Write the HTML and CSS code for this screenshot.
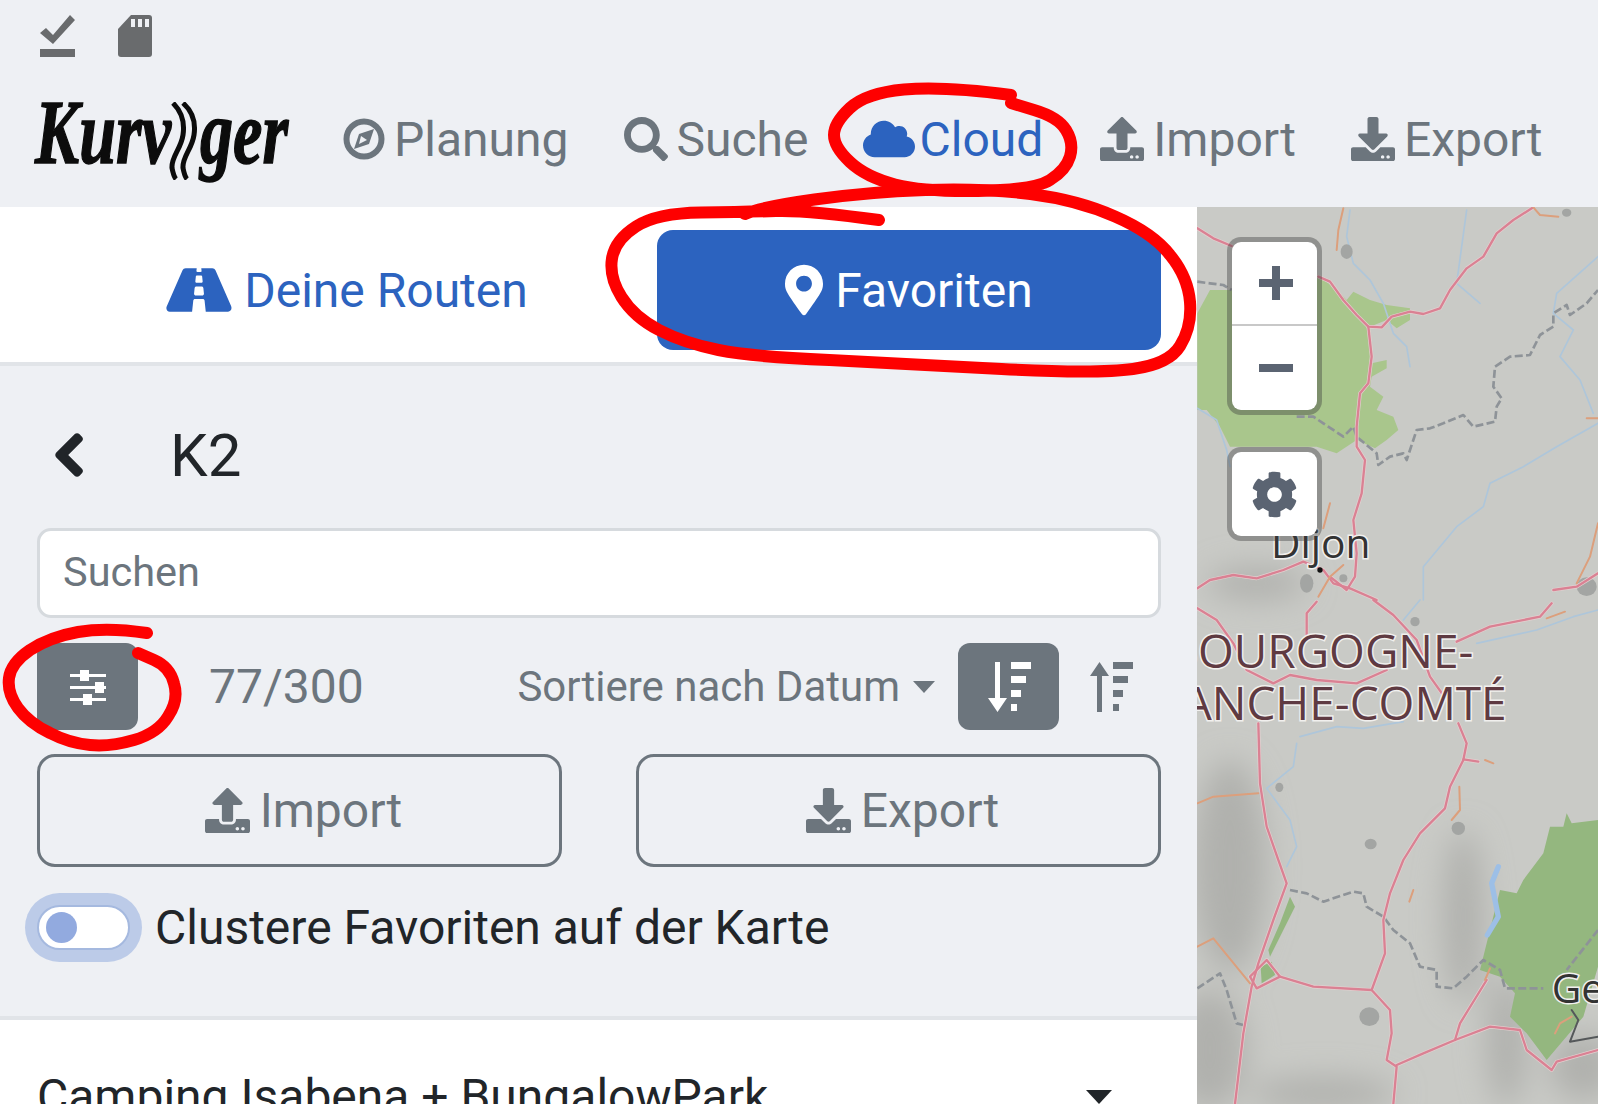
FILE: index.html
```html
<!DOCTYPE html>
<html lang="de">
<head>
  <meta charset="UTF-8">
  <title>Kurviger - Favoriten</title>
  <link rel="stylesheet" href="styles.css">
</head>
<body>

  <!-- Header -->
  <div class="header">
    <div class="status-icons">
      <svg class="status-check" viewBox="0 0 35 42"><path d="M0 18l6-5 7 7L30 0l5 5-22 24z"/><rect y="34" width="35" height="8"/></svg>
      <svg class="status-sd" viewBox="0 0 34 42"><path d="M13 0h18a3 3 0 0 1 3 3v36a3 3 0 0 1-3 3H3a3 3 0 0 1-3-3V14z"/><path class="sd-pins" d="M13 4h4v8h-4zM20 4h4v8h-4zM27 4h4v8h-4z"/></svg>
    </div>
    <div class="nav">
      <div class="logo">
        <span class="logo-text">Kurv</span>
        <svg class="logo-wave" viewBox="0 0 30 78"><path d="M5 1C13 9 17 20 15 33 13 47 3 55 4 66 5 71 6 75 8 77"/><path d="M15 1C24 9 28 20 26 33 24 47 14 55 15 66 16 71 17 75 19 77"/></svg>
        <span class="logo-text logo-end">ger</span>
      </div>
      <a class="nav-link">
        <svg class="nav-icon icon-compass" viewBox="0 0 42 42"><circle class="compass-ring" cx="21" cy="21" r="17.500"/><path d="M31 11L26 26 11 31 16 16z"/><path class="compass-cut" d="M16 26L24 22 18 18z"/></svg>
        Planung
      </a>
      <a class="nav-link">
        <svg class="nav-icon" viewBox="0 0 512 512"><path d="M505 442.7L405.3 343c-4.5-4.5-10.6-7-17-7H372c27.6-35.3 44-79.7 44-128C416 93.1 322.9 0 208 0S0 93.1 0 208s93.1 208 208 208c48.3 0 92.7-16.4 128-44v16.3c0 6.4 2.5 12.5 7 17l99.7 99.7c9.4 9.4 24.6 9.4 33.9 0l28.3-28.3c9.4-9.4 9.4-24.6.1-34zM208 336c-70.7 0-128-57.2-128-128 0-70.7 57.2-128 128-128 70.7 0 128 57.2 128 128 0 70.7-57.2 128-128 128z"/></svg>
        Suche
      </a>
      <a class="nav-link active">
        <svg class="nav-icon icon-cloud" viewBox="0 0 640 512"><path d="M537.6 226.6c4.1-10.7 6.4-22.4 6.4-34.6 0-53-43-96-96-96-19.7 0-38.1 6-53.3 16.2C367 64.2 315.3 32 256 32c-88.4 0-160 71.6-160 160 0 2.7.1 5.4.2 8.1C40.2 219.8 0 273.2 0 336c0 79.5 64.5 144 144 144h368c70.7 0 128-57.3 128-128 0-61.9-44-113.6-102.4-125.4z"/></svg>
        Cloud
      </a>
      <a class="nav-link">
        <svg class="nav-icon" viewBox="0 0 512 512"><use href="#icon-upload"/></svg>
        Import
      </a>
      <a class="nav-link">
        <svg class="nav-icon" viewBox="0 0 512 512"><use href="#icon-download"/></svg>
        Export
      </a>
    </div>
  </div>

  <div class="main">
    <!-- Sidebar -->
    <div class="sidebar">
      <div class="tabs">
        <button class="tab">
          <svg class="tab-road" viewBox="0 0 576 512"><path d="M573.19 402.67l-139.79-320C428.43 71.29 417.6 64 405.68 64h-97.59l2.45 23.16c.5 4.72-3.21 8.84-7.96 8.84h-29.16c-4.75 0-8.46-4.12-7.96-8.84L267.91 64h-97.59c-11.93 0-22.76 7.29-27.73 18.67L2.8 402.67C-6.45 423.86 8.31 448 30.11 448h196.83l10.31-97.68c.86-8.14 7.72-14.32 15.91-14.32h68.34c8.19 0 15.05 6.18 15.91 14.32L347.72 448h196.83c21.8 0 36.56-24.14 27.64-45.33zM260.4 135.16a8 8 0 0 1 7.96-7.16h39.29c4.09 0 7.53 3.09 7.96 7.16l4.6 43.58c.75 7.09-4.81 13.26-11.93 13.26h-40.54c-7.13 0-12.68-6.17-11.93-13.26l4.6-43.58zM315.64 304h-55.29c-9.5 0-16.91-8.23-15.91-17.68l5.07-48c.86-8.14 7.72-14.32 15.91-14.32h45.15c8.19 0 15.05 6.18 15.91 14.32l5.07 48c1 9.45-6.41 17.68-15.91 17.68z"/></svg>
          Deine Routen
        </button>
        <button class="tab tab-active">
          <svg class="tab-pin" viewBox="0 0 384 512"><path d="M172.268 501.67C26.97 291.031 0 268.413 0 192 0 85.961 85.961 0 192 0s192 85.961 192 192c0 76.413-26.97 99.031-172.268 309.67-9.535 13.774-29.93 13.773-39.464 0zM192 272c44.183 0 80-35.817 80-80s-35.817-80-80-80-80 35.817-80 80 35.817 80 80 80z"/></svg>
          Favoriten
        </button>
      </div>

      <div class="panel">
        <div class="folder-row">
          <svg class="back-icon" viewBox="0 0 320 512"><path d="M34.52 239.03L228.87 44.69c9.37-9.37 24.57-9.37 33.94 0l22.67 22.67c9.36 9.36 9.37 24.52.04 33.9L131.49 256l154.02 154.75c9.34 9.38 9.32 24.54-.04 33.9l-22.67 22.67c-9.37 9.37-24.57 9.37-33.94 0L34.52 272.97c-9.37-9.37-9.37-24.57 0-33.94z"/></svg>
          <div class="folder-name">K2</div>
        </div>

        <input class="search" type="text" placeholder="Suchen">

        <div class="toolbar">
          <button class="square-btn filter-btn">
            <svg viewBox="0 0 36 36" class="sliders"><path d="M0 5h36v3H0zM0 17h36v3H0zM0 29h36v3H0z"/><path d="M10 1h9v11h-9zM25 13h9v11h-9zM13 25h9v11h-9z"/></svg>
          </button>
          <div class="counter">77/300</div>
          <div class="sort-label">Sortiere nach Datum<span class="caret"></span></div>
          <button class="square-btn sort-btn">
            <svg viewBox="0 0 44 50" class="sort-icon"><path d="M8 0h5v36h7L10.500 50 1 36h7zM24 0h20v7H24zM24 14h15v7H24zM24 28h10v7H24zM24 42h6v7h-6z"/></svg>
          </button>
          <button class="sort-plain">
            <svg viewBox="0 0 44 50" class="sort-icon"><path d="M8 50h5V14h7L10.500 0 1 14h7zM24 0h20v7H24zM24 14h15v7H24zM24 28h10v7H24zM24 42h6v7h-6z"/></svg>
          </button>
        </div>

        <div class="action-row">
          <button class="outline-btn">
            <svg class="btn-icon" viewBox="0 0 512 512"><use href="#icon-upload"/></svg>
            Import
          </button>
          <button class="outline-btn">
            <svg class="btn-icon" viewBox="0 0 512 512"><use href="#icon-download"/></svg>
            Export
          </button>
        </div>

        <div class="switch-row">
          <div class="switch"><span class="switch-dot"></span></div>
          <div class="switch-label">Clustere Favoriten auf der Karte</div>
        </div>
      </div>

      <div class="list">
        <div class="list-item">
          <span>Camping Isabena + BungalowPark</span>
          <span class="list-caret"></span>
        </div>
      </div>
    </div>

    <!-- Map -->
    <div class="map">
      <svg class="map-canvas" viewBox="21 21 1203 2691">
        <defs>
          <filter id="soft" x="-60%" y="-60%" width="220%" height="220%"><feGaussianBlur stdDeviation="45"/></filter>
          <filter id="softer"><feGaussianBlur stdDeviation="1.500"/></filter>
          <g id="roads">
            <path d="M22 85L70 115 125 138"/>
            <path d="M385 230L420 245 460 300 500 345 535 380 575 382 605 350 660 335 700 342 750 325 780 270 830 205 880 170 920 100 970 60 1030 22"/>
            <path d="M535 380L545 470 535 550 510 580 500 680 500 740 525 780 515 880 490 960 500 1060 495 1130 470 1170 420 1130"/>
            <path d="M22 1165L60 1140 130 1125 200 1135 280 1110 340 1085 400 1110 430 1150 480 1165 560 1200"/>
            <path d="M1090 1170L1160 1160 1224 1120"/>
            <g transform="translate(0 1200)">
              <path d="M22 25L80 60 130 130 170 210 250 250 300 225 380 240 500 250 590 210"/>
              <path d="M350 110L350 40 380 5"/>
              <path d="M550 0L610 45 680 120 720 230 770 300"/>
              <path d="M800 125L900 80 1050 50 1085 10"/>
              <path d="M205 370L210 550 230 680 265 780 290 850 250 960 205 1090 185 1160 160 1300 135 1512"/>
              <path d="M805 370L830 430 820 480 780 560 765 625 690 700 640 780 600 880 580 960 585 1060 545 1170 600 1230 605 1300 590 1380 620 1400 610 1512"/>
              <path d="M820 478L865 485"/>
              <path d="M620 1395L700 1360 795 1320 900 1280 990 1290 1010 1350 1085 1410 1100 1385 1224 1350"/>
              <path d="M795 1320L810 1270 890 1140"/>
              <path d="M270 1130L370 1160 545 1170"/>
              <path d="M180 1130L230 1080 270 1130 200 1165z"/>
            </g>
          </g>
        </defs>

        <rect x="0" y="0" width="1300" height="2800" class="land"/>

        <!-- hill shading -->
        <g filter="url(#soft)" class="relief">
          <ellipse cx="120" cy="2000" rx="110" ry="320"/>
          <ellipse cx="60" cy="2550" rx="110" ry="180"/>
          <ellipse cx="950" cy="2520" rx="60" ry="200"/>
          <ellipse cx="820" cy="2150" rx="60" ry="260"/>
          <ellipse cx="1180" cy="2600" rx="100" ry="100"/>
          <ellipse cx="200" cy="1150" rx="150" ry="50"/>
          <ellipse cx="400" cy="2680" rx="220" ry="50"/>
        </g>

        <!-- forests -->
        <path class="forest" d="M22 340L60 270 125 270 385 230 430 260 470 300 490 275 540 300 590 315 660 325 660 360 620 385 590 360 540 380 545 490 590 480 590 505 545 530 540 560 580 590 560 630 610 650 625 690 590 720 555 745 500 720 440 760 380 740 120 740 90 680 50 630 22 630z"/>
        <g transform="translate(0 1200)">
          <path class="forest-dark" d="M1130 640L1145 670 1224 660 1224 1100 1180 1250 1070 1380 1010 1300 960 1250 975 1180 930 1130 870 1110 890 1030 930 870 980 880 1000 840 1060 760 1080 680 1120 680z"/>
          <path class="forest-dark" d="M300 890L315 920 270 1010 240 1070 235 1050 270 970z"/>
          <path class="forest-dark" d="M212 1100L245 1085 255 1125 215 1150z"/>
        </g>

        <!-- water -->
        <g class="river">
          <path d="M480 30L470 110 490 190 540 240 580 310 610 400 650 440 660 500"/>
          <path d="M830 30L800 250 870 310"/>
          <path d="M1224 170L1100 280 1090 340 1150 390 1110 470 1170 540 1210 640"/>
          <path d="M700 1200L700 1100 800 980 880 920 900 850 1000 800 1100 740 1224 670"/>
          <path d="M22 625L80 660 110 750 120 800"/>
          <g transform="translate(0 1200)">
            <path d="M320 430L310 500 230 565 300 660 320 740 290 800"/>
            <path d="M330 410L440 380 520 385 640 365"/>
            <path d="M860 130L1040 90 1150 50 1224 30"/>
            <path d="M640 60L690 0"/>
          </g>
        </g>
        <path class="lake" transform="translate(0 1200)" d="M925 800L905 850 925 950 892 1005"/>

        <!-- towns -->
        <g class="town">
          <ellipse cx="470" cy="155" rx="18" ry="22"/>
          <ellipse cx="1130" cy="38" rx="14" ry="12"/>
          <ellipse cx="350" cy="1150" rx="20" ry="28"/>
          <ellipse cx="460" cy="1135" rx="12" ry="12"/>
          <ellipse cx="1190" cy="1160" rx="30" ry="28"/>
          <g transform="translate(0 1200)">
            <ellipse cx="675" cy="65" rx="14" ry="14"/>
            <ellipse cx="805" cy="685" rx="20" ry="20"/>
            <ellipse cx="538" cy="1250" rx="30" ry="28"/>
            <ellipse cx="542" cy="732" rx="18" ry="16"/>
            <ellipse cx="268" cy="562" rx="12" ry="14"/>
          </g>
        </g>

        <!-- borders -->
        <g class="border">
          <path d="M22 245L60 250 100 255 125 270"/>
          <path d="M320 650L370 650 400 670 460 710 490 680 500 710 560 760 565 795 600 770 640 760 650 780 680 690 720 685 760 670 820 645 850 680 915 665 920 620 935 595 910 560 915 500 960 470 1020 465 1050 405 1090 380 1090 340 1130 315 1140 345 1190 310 1224 270"/>
          <g transform="translate(0 1200)">
            <path d="M300 870L350 880 400 905 490 875 520 880 530 920 580 950 610 990 660 1030 690 1100 740 1110 740 1160 790 1165 830 1130 880 1080 930 1110 945 1165 1060 1165"/>
            <path d="M22 1165L90 1120 110 1170 140 1270 160 1275"/>
            <path d="M1224 990L1130 1110"/>
          </g>
        </g>
        <path class="border-dark" transform="translate(0 1200)" d="M1145 1230L1165 1260 1140 1325 1224 1310"/>

        <!-- roads -->
        <g filter="url(#softer)">
          <use href="#roads" class="road-case"/>
          <use href="#roads" class="road-line"/>
          <g class="road-minor">
            <path d="M460 25L445 90 440 150"/>
            <path d="M1030 22L1050 45 1105 50"/>
            <path d="M420 910L400 985"/>
            <path d="M1190 655L1224 655"/>
            <path d="M1224 970L1200 1070 1160 1150"/>
            <path d="M385 1190L420 1130 460 1095"/>
            <g transform="translate(0 1200)">
              <path d="M22 610L70 590 205 580"/>
              <path d="M22 1040L70 1015 180 1150"/>
              <path d="M808 560L810 630 785 660"/>
              <path d="M670 870L658 905"/>
              <path d="M885 480L910 490"/>
              <path d="M1070 55L1125 35"/>
              <path d="M1095 1300L1110 1270 1145 1250"/>
              <path d="M885 1140L900 1105"/>
            </g>
          </g>
        </g>

        <circle class="city-dot" cx="390" cy="1110" r="8"/>
        <text class="city" x="243" y="1075">Dijon</text>
        <text class="region" x="850" y="1405" text-anchor="end">BOURGOGNE-</text>
        <text class="region" x="950" y="1560" text-anchor="end">FRANCHE-COMTÉ</text>
        <text class="city" x="1085" y="2410">Genève</text>
      </svg>

      <div class="map-controls">
        <div class="map-box">
          <button class="map-btn map-btn-top"><svg viewBox="0 0 34 34" class="zoom-icon"><path d="M13 0h8v13h13v8H21v13h-8V21H0v-8h13z"/></svg></button>
          <button class="map-btn"><svg viewBox="0 0 34 34" class="zoom-icon"><path d="M0 13h34v8H0z"/></svg></button>
        </div>
        <div class="map-box">
          <button class="map-btn map-btn-gear">
            <svg viewBox="0 0 512 512" class="gear-icon"><path d="M487.4 315.7l-42.6-24.6c4.3-23.2 4.3-47 0-70.2l42.6-24.6c4.9-2.8 7.1-8.6 5.5-14-11.1-35.6-30-67.8-54.7-94.6-3.8-4.1-10-5.1-14.8-2.3L380.8 110c-17.9-15.4-38.5-27.3-60.8-35.1V25.8c0-5.6-3.9-10.5-9.4-11.7-36.7-8.2-74.3-7.8-109.2 0-5.5 1.2-9.4 6.1-9.4 11.7V75c-22.2 7.9-42.8 19.8-60.8 35.1L88.7 85.5c-4.9-2.8-11-1.9-14.8 2.3-24.7 26.7-43.6 58.9-54.7 94.6-1.7 5.4.6 11.2 5.5 14L67.3 221c-4.3 23.2-4.3 47 0 70.2l-42.6 24.6c-4.9 2.8-7.1 8.6-5.5 14 11.1 35.6 30 67.8 54.7 94.6 3.8 4.1 10 5.1 14.8 2.3l42.6-24.6c17.9 15.4 38.5 27.3 60.8 35.1v49.2c0 5.6 3.9 10.5 9.4 11.7 36.7 8.2 74.3 7.8 109.2 0 5.5-1.2 9.4-6.1 9.4-11.7v-49.2c22.2-7.9 42.8-19.8 60.8-35.1l42.6 24.6c4.9 2.8 11 1.9 14.8-2.3 24.7-26.7 43.6-58.9 54.7-94.6 1.5-5.5-.7-11.3-5.6-14.1zM256 336c-44.1 0-80-35.9-80-80s35.9-80 80-80 80 35.9 80 80-35.9 80-80 80z"/></svg>
          </button>
        </div>
      </div>
    </div>
  </div>

  <!-- Red marker scribbles on top of the screenshot -->
  <svg class="scribbles" viewBox="0 0 1598 1104">
    <path d="M1011 95Q944 86 904 89.500Q866 93 850 108Q834 123 834 135Q834 147 850 162Q866 177 895 184.500Q925 192 978.500 191Q1034 190 1050 180Q1066 170 1070 156.500Q1074 143 1066 130Q1058 117 1034 110L1011 103"/>
    <path d="M879 220Q807 210 776 211Q745 212 701 212.500Q657 213 636 226.500Q615 240 612 258.500Q609 277 621.500 297Q634 317 659 330Q684 343 718.500 350Q753 357 829.500 360Q906 364 1001.500 369Q1097 374 1133 369Q1169 364 1180 346Q1192 327 1190 302Q1188 277 1170 255Q1153 233 1115 216.500Q1078 200 1030.500 194Q983 188 925.500 190Q868 192 814.500 199.500Q761 207 745 214"/>
    <path d="M147 633Q107 627 78 632Q50 637 30 650Q11 663 9 678Q7 693 18 708Q29 723 50 733Q69 743 90 745Q110 747 134 740Q158 733 168 716.500Q179 700 174 683.500Q170 667 154 660L138 653"/>
  </svg>

  <!-- Shared icons -->
  <svg class="icon-defs">
    <defs>
      <path id="icon-upload" d="M296 384h-80c-13.300 0-24-10.700-24-24V192h-87.700c-17.800 0-26.700-21.500-14.100-34.100L242.300 5.700c7.500-7.500 19.800-7.500 27.300 0l152.200 152.200c12.600 12.600 3.700 34.100-14.100 34.100H320v168c0 13.300-10.700 24-24 24zm216-8v112c0 13.300-10.700 24-24 24H24c-13.300 0-24-10.700-24-24V376c0-13.300 10.700-24 24-24h136v8c0 30.900 25.100 56 56 56h80c30.900 0 56-25.100 56-56v-8h136c13.300 0 24 10.700 24 24zm-124 88c0-11-9-20-20-20s-20 9-20 20 9 20 20 20 20-9 20-20zm64 0c0-11-9-20-20-20s-20 9-20 20 9 20 20 20 20-9 20-20z"/>
      <path id="icon-download" d="M216 0h80c13.300 0 24 10.700 24 24v168h87.700c17.800 0 26.700 21.500 14.100 34.100L269.700 378.300c-7.500 7.500-19.800 7.500-27.300 0L90.100 226.100c-12.600-12.600-3.700-34.100 14.100-34.100H192V24c0-13.300 10.700-24 24-24zm296 376v112c0 13.300-10.700 24-24 24H24c-13.300 0-24-10.700-24-24V376c0-13.300 10.700-24 24-24h146.700l49 49c20.100 20.100 52.500 20.100 72.600 0l49-49H488c13.300 0 24 10.700 24 24zm-124 88c0-11-9-20-20-20s-20 9-20 20 9 20 20 20 20-9 20-20zm64 0c0-11-9-20-20-20s-20 9-20 20 9 20 20 20 20-9 20-20z"/>
    </defs>
  </svg>

</body>
</html>
```

FILE: styles.css
```css
* {
  margin: 0;
  padding: 0;
  box-sizing: border-box;
}

body {
  position: relative;
  width: 1598px;
  height: 1104px;
  overflow: hidden;
  font-family: Roboto, sans-serif;
  font-size: 48px;
  background-color: #eef0f4;
  color: #212529;
}

button {
  font-family: inherit;
  font-size: inherit;
  cursor: pointer;
  background: none;
  border: none;
}

svg {
  fill: currentColor;
}

/* Header */
.header {
  height: 207px;
  padding: 15px 0 0 35px;
}

.status-icons {
  display: flex;
  align-items: flex-start;
  gap: 43px;
  padding-left: 5px;
  color: #696b6d;
}

.status-check {
  width: 35px;
  height: 42px;
}

.status-sd {
  width: 34px;
  height: 42px;
}

.sd-pins {
  fill: #eef0f4;
}

.nav {
  display: flex;
  align-items: center;
  height: 96px;
  margin-top: 34px;
}

.logo {
  display: flex;
  align-items: center;
  width: 251px;
  margin-right: 57px;
  color: #0c0c0c;
  font-family: "Liberation Serif", serif;
  font-size: 92px;
  font-style: italic;
  font-weight: bold;
  line-height: 1;
}

.logo-text {
  display: block;
  width: 133px;
  flex: none;
  transform: translateY(-7px) scaleX(0.72);
  transform-origin: left center;
  -webkit-text-stroke: 1.5px #0c0c0c;
}

.logo-wave {
  width: 30px;
  height: 78px;
  flex: none;
  margin: 4px 2px 0 0;
  fill: none;
  stroke: #0c0c0c;
  stroke-width: 5;
}

.logo-end {
  width: 88px;
}

.nav-link {
  display: flex;
  align-items: center;
  gap: 9px;
  margin-right: 55px;
  color: #6c757d;
  white-space: nowrap;
}

.nav-link.active {
  color: #2c63bf;
  gap: 4px;
  margin-right: 57px;
}

.nav-icon {
  width: 44px;
  height: 44px;
  flex: none;
}

.icon-compass {
  width: 42px;
  height: 42px;
}

.compass-ring {
  fill: none;
  stroke: currentColor;
  stroke-width: 6;
}

.compass-cut {
  fill: #eef0f4;
}

.icon-cloud {
  width: 52px;
}

/* Layout */
.main {
  display: flex;
  height: 897px;
}

.sidebar {
  display: flex;
  flex-direction: column;
  width: 1197px;
  flex: none;
}

/* Tabs */
.tabs {
  display: grid;
  grid-template-columns: 620px 504px;
  height: 159px;
  flex: none;
  padding: 23px 0 0 37px;
  background-color: #fff;
  border-bottom: 4px solid #e1e4e8;
}

.tab {
  display: flex;
  align-items: center;
  justify-content: center;
  gap: 12px;
  height: 120px;
  color: #2c63bf;
  border-radius: 16px;
}

.tab-active {
  background-color: #2c63bf;
  color: #fff;
}

.tab-road {
  width: 66px;
  height: 58px;
}

.tab-pin {
  width: 38px;
  height: 56px;
}

/* Filter panel */
.panel {
  height: 654px;
  flex: none;
  padding: 0 36px 0 37px;
  border-bottom: 4px solid #e1e4e8;
}

.folder-row {
  display: flex;
  align-items: center;
  height: 162px;
  padding-top: 16px;
}

.back-icon {
  width: 36px;
  height: 48px;
  margin-left: 14px;
  stroke: currentColor;
  stroke-width: 28;
}

.folder-name {
  margin-left: 83px;
  font-size: 60px;
}

.search {
  display: block;
  width: 100%;
  height: 90px;
  padding: 0 23px 3px;
  font-family: inherit;
  font-size: 41.500px;
  background-color: #fff;
  border: 3px solid #d6dade;
  border-radius: 14px;
}

.search::placeholder {
  color: #6c757d;
  opacity: 1;
}

.toolbar {
  display: flex;
  align-items: center;
  height: 87px;
  margin-top: 25px;
  color: #6c757d;
}

.square-btn {
  display: flex;
  align-items: center;
  justify-content: center;
  width: 101px;
  height: 87px;
  flex: none;
  background-color: #6c757d;
  color: #fff;
  border-radius: 12px;
}

.sliders {
  width: 36px;
  height: 36px;
}

.counter {
  margin-left: 71px;
}

.sort-label {
  display: flex;
  align-items: center;
  margin-left: auto;
  font-size: 42px;
}

.caret {
  width: 0;
  height: 0;
  margin-left: 13px;
  border-left: 11px solid transparent;
  border-right: 11px solid transparent;
  border-top: 12px solid #6c757d;
}

.sort-btn {
  margin-left: 23px;
}

.sort-icon {
  width: 44px;
  height: 50px;
}

.sort-plain {
  display: flex;
  margin-left: 30px;
  margin-right: 28px;
  color: #6c757d;
}

.action-row {
  display: grid;
  grid-template-columns: 525px 525px;
  justify-content: space-between;
  margin-top: 24px;
}

.outline-btn {
  display: flex;
  align-items: center;
  justify-content: center;
  gap: 10px;
  height: 113px;
  padding-left: 8px;
  color: #6c757d;
  border: 3px solid #6c757d;
  border-radius: 18px;
}

.btn-icon {
  width: 45px;
  height: 45px;
}

.switch-row {
  display: flex;
  align-items: center;
  height: 71px;
  margin-top: 25px;
}

.switch {
  display: flex;
  align-items: center;
  width: 93px;
  height: 45px;
  flex: none;
  padding-left: 7px;
  background-color: #fff;
  border: 2px solid #a5b9df;
  border-radius: 23px;
  box-shadow: 0 0 0 12px #bccbe8;
}

.switch-dot {
  width: 31px;
  height: 31px;
  background-color: #92aadf;
  border-radius: 50%;
}

.switch-label {
  margin-left: 25px;
}

/* List */
.list {
  flex: 1;
  min-height: 0;
  padding: 0 37px;
  background-color: #fff;
}

.list-item {
  display: flex;
  justify-content: space-between;
  padding-top: 53px;
  font-size: 48px;
  line-height: 1;
}

.list-caret {
  width: 0;
  height: 0;
  margin: 17px 48px 0 0;
  border-left: 13px solid transparent;
  border-right: 13px solid transparent;
  border-top: 14px solid #212529;
}

/* Map */
.map {
  position: relative;
  flex: 1;
  overflow: hidden;
  background-color: #c9cac6;
}

.map-canvas {
  display: block;
  width: 401px;
  height: 897px;
}

.land {
  fill: #c9cac6;
}

.relief {
  fill: #b0b1ad;
}

.forest {
  fill: #a9c68c;
}

.forest-dark {
  fill: #94b77f;
}

.river,
.border,
.road-minor,
.road-case,
.road-line,
.lake,
.border-dark {
  fill: none;
  stroke-linejoin: round;
  stroke-linecap: round;
}

.river {
  stroke: #aec6da;
  stroke-width: 5;
}

.lake {
  stroke: #9dbfe6;
  stroke-width: 16;
}

.town {
  fill: #a3a5a3;
}

.border {
  stroke: #8e9398;
  stroke-width: 8;
  stroke-linecap: butt;
  stroke-dasharray: 24 10;
}

.border-dark {
  stroke: #55585a;
  stroke-width: 6;
}

.road-case {
  stroke: #e4d0d0;
  stroke-width: 11;
}

.road-line {
  stroke: #da8193;
  stroke-width: 7;
}

.road-minor {
  stroke: #dc9f7c;
  stroke-width: 6;
}

.city-dot {
  fill: #111;
}

.city,
.region {
  font-family: "Open Sans", sans-serif;
  paint-order: stroke;
  stroke: #f1f0ee;
  stroke-width: 9;
}

.city {
  font-size: 122px;
  fill: #333;
}

.region {
  font-size: 138px;
  fill: #5f3a42;
}

.map-controls {
  position: absolute;
  top: 30px;
  left: 30px;
  display: flex;
  flex-direction: column;
  gap: 32px;
}

.map-box {
  width: 95px;
  padding: 5px;
  background-color: rgba(60, 60, 60, 0.4);
  border-radius: 14px;
}

.map-btn {
  display: flex;
  align-items: center;
  justify-content: center;
  width: 85px;
  height: 84px;
  color: #5b6472;
  background-color: #fff;
  border-radius: 0 0 9px 9px;
}

.map-btn-top {
  border-bottom: 2px solid #c8c8c8;
  border-radius: 9px 9px 0 0;
}

.map-btn-gear {
  border-radius: 9px;
}

.zoom-icon {
  width: 34px;
  height: 34px;
  margin-left: 3px;
}

.gear-icon {
  width: 47px;
  height: 47px;
}

/* Scribbles */
.scribbles {
  position: absolute;
  top: 0;
  left: 0;
  width: 1598px;
  height: 1104px;
  fill: none;
  stroke: #fe0000;
  stroke-width: 12;
  stroke-linecap: round;
  stroke-linejoin: round;
  pointer-events: none;
}

.icon-defs {
  position: absolute;
  width: 0;
  height: 0;
}
```
